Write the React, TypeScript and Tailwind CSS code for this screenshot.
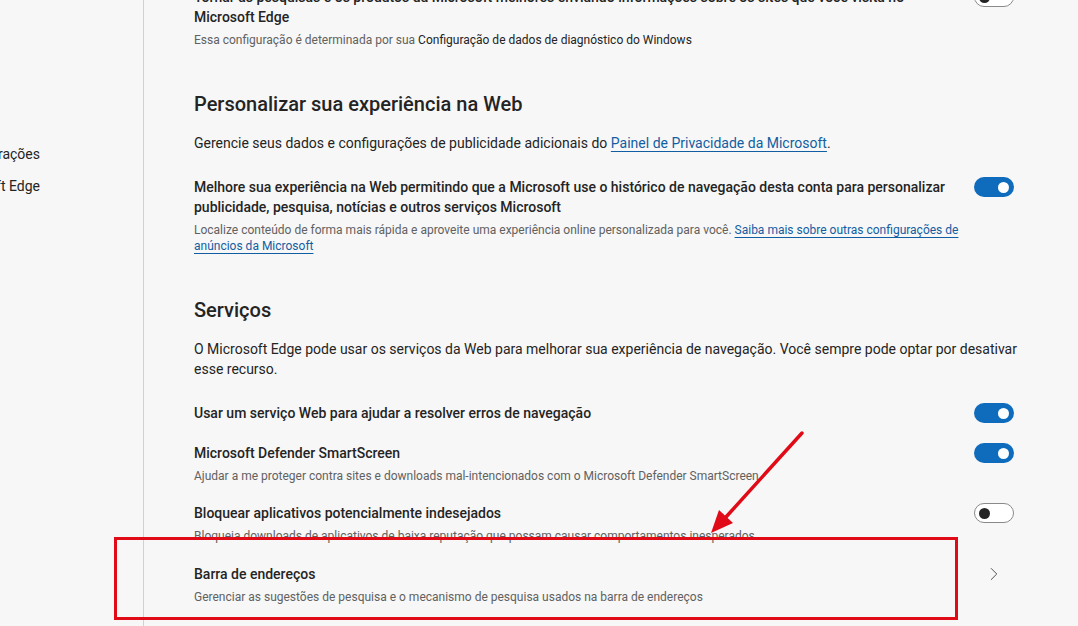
import React from 'react';
import { ChevronRight } from 'lucide-react';

type ToggleProps = { on?: boolean };

function Toggle({ on }: ToggleProps) {
  if (on) {
    return (
      <div className="flex h-[20px] w-[40px] shrink-0 items-center justify-end rounded-full bg-[#0f6cbd] pr-[5px]">
        <div className="h-[11px] w-[11px] rounded-full bg-white" />
      </div>
    );
  }
  return (
    <div className="flex h-[20px] w-[40px] shrink-0 items-center rounded-full border border-[#8a8a8a] bg-white pl-[4px]">
      <div className="h-[11px] w-[11px] rounded-full bg-[#242424]" />
    </div>
  );
}

type RowProps = {
  title: React.ReactNode;
  sub?: React.ReactNode;
  control?: React.ReactNode;
  className?: string;
};

function SettingRow({ title, sub, control, className = '' }: RowProps) {
  return (
    <div className={`flex items-start gap-[14px] ${className}`}>
      <div className="min-w-0 flex-1">
        <div className="text-[14px] leading-[20px] font-medium text-[#242424]">{title}</div>
        {sub && <div className="mt-[5px] text-[12px] leading-[16px] text-[#616161]">{sub}</div>}
      </div>
      {control}
    </div>
  );
}

const link = 'text-[#115ea3] underline decoration-[#115ea3] underline-offset-[3px]';

const sideItems = ['Redefinir configurações', 'Sobre o Microsoft Edge'];

export default function App() {
  return (
    <div className="relative flex h-[626px] w-full overflow-hidden bg-[#f7f7f7] font-['Roboto',sans-serif] text-[#242424]">
      {/* sidebar, scrolled off to the left */}
      <aside className="w-[144px] shrink-0 overflow-hidden border-r border-[#d1d1d1] pt-[138px]">
        {sideItems.map((item) => (
          <div key={item} className="flex h-[32px] w-[40px] items-center justify-end whitespace-nowrap text-[14px] text-[#242424]">
            {item}
          </div>
        ))}
      </aside>

      <main className="-mt-[13px] w-[870px] shrink-0 pl-[50px]">
        <SettingRow
          title="Tornar as pesquisas e os produtos da Microsoft melhores enviando informações sobre os sites que você visita no Microsoft Edge"
          sub={
            <>
              Essa configuração é determinada por sua{' '}
              <span className="text-[#242424]">Configuração de dados de diagnóstico do Windows</span>
            </>
          }
          control={<Toggle />}
        />

        <h2 className="mt-[42px] text-[20px] leading-[28px] font-medium text-[#242424]">Personalizar sua experiência na Web</h2>
        <p className="mt-[15px] text-[14px] leading-[20px]">
          Gerencie seus dados e configurações de publicidade adicionais do{' '}
          <span className={link}>Painel de Privacidade da Microsoft</span>.
        </p>

        <SettingRow
          className="mt-[24px]"
          title="Melhore sua experiência na Web permitindo que a Microsoft use o histórico de navegação desta conta para personalizar publicidade, pesquisa, notícias e outros serviços Microsoft"
          sub={
            <>
              Localize conteúdo de forma mais rápida e aproveite uma experiência online personalizada para você.{' '}
              <span className={link}>Saiba mais sobre outras configurações de anúncios da Microsoft</span>
            </>
          }
          control={<Toggle on />}
        />

        <h2 className="mt-[42px] text-[20px] leading-[28px] font-medium text-[#242424]">Serviços</h2>
        <p className="-mr-[12px] mt-[15px] text-[14px] leading-[20px]">
          O Microsoft Edge pode usar os serviços da Web para melhorar sua experiência de navegação. Você sempre pode optar por desativar esse recurso.
        </p>

        <SettingRow
          className="mt-[24px]"
          title="Usar um serviço Web para ajudar a resolver erros de navegação"
          control={<Toggle on />}
        />
        <SettingRow
          className="mt-[20px]"
          title="Microsoft Defender SmartScreen"
          sub="Ajudar a me proteger contra sites e downloads mal-intencionados com o Microsoft Defender SmartScreen"
          control={<Toggle on />}
        />
        <SettingRow
          className="mt-[19px]"
          title="Bloquear aplicativos potencialmente indesejados"
          sub="Bloqueia downloads de aplicativos de baixa reputação que possam causar comportamentos inesperados"
          control={<Toggle />}
        />
        <SettingRow
          className="mt-[20px]"
          title="Barra de endereços"
          sub="Gerenciar as sugestões de pesquisa e o mecanismo de pesquisa usados na barra de endereços"
          control={
            <div className="flex h-[20px] w-[40px] shrink-0 items-center justify-center">
              <ChevronRight size={22} strokeWidth={1} className="text-[#424242]" />
            </div>
          }
        />
      </main>

      {/* annotation: highlight box and arrow */}
      <div className="pointer-events-none absolute left-[114px] top-[537px] h-[83px] w-[844px] border-[3px] border-[#e00b16]" />
      <svg className="pointer-events-none absolute left-[700px] top-[425px]" width="110" height="115" viewBox="0 0 110 115">
        <line x1="102" y1="8" x2="26" y2="92" stroke="#e00b16" strokeWidth="3.5" strokeLinecap="round" />
        <polygon points="11,108 33,98 19,85" fill="#e00b16" />
      </svg>
    </div>
  );
}
